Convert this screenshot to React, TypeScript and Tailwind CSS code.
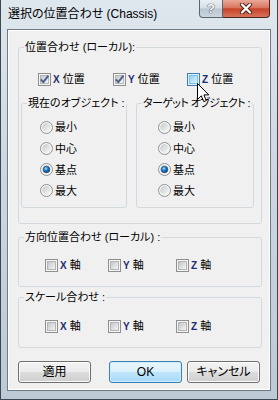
import type { ReactNode } from "react";

function CheckBox({ checked = false, hot = false }: { checked?: boolean; hot?: boolean }) {
  return (
    <svg width="13" height="13" viewBox="0 0 13 13" className="shrink-0">
      <defs>
        <linearGradient id="cbNormal" x1="0" y1="0" x2="1" y2="1">
          <stop offset="0" stopColor="#c2c4c6" />
          <stop offset="1" stopColor="#f7f7f7" />
        </linearGradient>
        <linearGradient id="cbHot" x1="0" y1="0" x2="1" y2="1">
          <stop offset="0" stopColor="#8fcdf5" />
          <stop offset="1" stopColor="#e2f4fe" />
        </linearGradient>
      </defs>
      <rect x="0.5" y="0.5" width="12" height="12" fill={hot ? "#dff2fd" : "#f5f5f5"} stroke={hot ? "#3c7fb1" : "#8e8f8f"} />
      <rect
        x="2.5"
        y="2.5"
        width="8"
        height="8"
        fill={hot ? "url(#cbHot)" : "url(#cbNormal)"}
        stroke={hot ? "#79c0ef" : "#b3b6b9"}
      />
      {checked && (
        <path d="M2.8 6.4 L5.3 9.2 L10.4 2.6" fill="none" stroke="#4b5f8f" strokeWidth="1.9" strokeLinejoin="round" />
      )}
    </svg>
  );
}

function Radio({ on = false }: { on?: boolean }) {
  return (
    <svg width="13" height="13" viewBox="0 0 13 13" className="shrink-0">
      <defs>
        <linearGradient id="rbFill" x1="0" y1="0" x2="1" y2="1">
          <stop offset="0" stopColor="#c6c8ca" />
          <stop offset="1" stopColor="#fafafa" />
        </linearGradient>
        <radialGradient id="rbDot" cx="0.4" cy="0.35" r="0.7">
          <stop offset="0" stopColor="#a4e2ff" />
          <stop offset="0.45" stopColor="#1e7dcc" />
          <stop offset="1" stopColor="#0b3463" />
        </radialGradient>
      </defs>
      <circle cx="6.5" cy="6.5" r="6" fill="#f7f7f7" stroke="#8d8f91" />
      <circle cx="6.5" cy="6.5" r="4.4" fill="url(#rbFill)" />
      {on && <circle cx="6.5" cy="6.5" r="3.3" fill="url(#rbDot)" stroke="#17406b" strokeWidth="0.6" />}
    </svg>
  );
}

function Group({
  label,
  className,
  legendClass = "",
  children,
}: {
  label: string;
  className: string;
  legendClass?: string;
  children: ReactNode;
}) {
  return (
    <fieldset className={`min-w-0 rounded-[3px] border border-[#d3dadf] ${className}`}>
      <legend className={`ml-[5px] px-[1px] text-[11px] leading-[14px] text-black whitespace-nowrap ${legendClass}`}>
        {label}
      </legend>
      {children}
    </fieldset>
  );
}

function Check({
  axis,
  word,
  checked,
  hot,
  className = "",
}: {
  axis: string;
  word: string;
  checked?: boolean;
  hot?: boolean;
  className?: string;
}) {
  return (
    <div className={`flex items-center gap-[2px] h-[14px] ${className}`}>
      <CheckBox checked={checked} hot={hot} />
      <span className="text-[11px] leading-[14px] whitespace-nowrap">
        <span className="font-bold text-[10px] text-[#1d2d72]">{axis}</span> {word}
      </span>
    </div>
  );
}

function RadioRow({ label, on, className }: { label: string; on?: boolean; className: string }) {
  return (
    <div className={`flex items-center gap-[2px] ${className}`}>
      <Radio on={on} />
      <span className="text-[11px] leading-[14px]">{label}</span>
    </div>
  );
}

function RadioList({ className }: { className: string }) {
  return (
    <div className={`mt-[6px] mb-[6px] ${className}`}>
      <RadioRow label="最小" className="h-[22px]" />
      <RadioRow label="中心" className="h-[21px]" />
      <RadioRow label="基点" on className="h-[21px]" />
      <RadioRow label="最大" className="h-[21px]" />
    </div>
  );
}

const plain =
  "h-[22px] w-[73px] rounded-[3px] border border-[#707070] bg-[linear-gradient(#f3f3f3_0%,#ebebeb_50%,#dddddd_50%,#cfcfcf_100%)] shadow-[inset_0_0_0_1px_#fbfbfb] text-[12px] leading-[14px] text-black";
const primary =
  "h-[22px] w-[73px] rounded-[3px] border border-[#3c7fb1] bg-[linear-gradient(#eaf6fd_0%,#d9f0fc_50%,#bee6fd_50%,#a7d9f5_100%)] shadow-[inset_0_0_0_1px_#cdeeff] text-[12px] leading-[14px] text-black";

export default function App() {
  return (
    <div className="relative w-[278px] h-[400px] flex flex-col border-x border-b border-[#3d4854] bg-[linear-gradient(#dfe7ee_0%,#cdd8e2_40%,#bccad6_100%)] font-['Liberation_Sans','Noto_Sans_CJK_JP',sans-serif] [font-feature-settings:'palt'] text-black select-none">
      <div className="h-[29px] flex justify-between items-start">
        <div className="pl-[7px] pt-[7px] text-[12px] leading-[14px] whitespace-nowrap">選択の位置合わせ (Chassis)</div>
        <div className="flex mr-[7px]">
          <div className="w-[24px] h-[18px] rounded-bl-[4px] border border-t-0 border-[#5a6672] bg-[linear-gradient(#e9eef3_0%,#d5dee6_48%,#b9c6d2_52%,#cbd6df_100%)] flex items-center justify-center text-[13px] leading-[14px] font-bold text-white [text-shadow:0_0_1px_#333,0_0_1px_#333]">
            ?
          </div>
          <div className="w-[47px] h-[18px] rounded-br-[4px] border border-l-0 border-t-0 border-[#4a2620] bg-[linear-gradient(#eaa898_0%,#da7660_45%,#c6432a_52%,#d8735a_100%)] flex items-center justify-center">
            <svg width="14" height="11" viewBox="0 0 14 11">
              <path d="M3 1.5 L11 9.5 M11 1.5 L3 9.5" stroke="#4a2018" strokeWidth="4.2" strokeLinecap="round" />
              <path d="M3 1.5 L11 9.5 M11 1.5 L3 9.5" stroke="#ffffff" strokeWidth="2.4" strokeLinecap="round" />
            </svg>
          </div>
        </div>
      </div>

      <div className="mx-[6px] h-[362px] border border-[#6e7a86] bg-[#f0f0f0] shadow-[inset_0_0_0_1px_#ffffff]">
        <Group label="位置合わせ (ローカル):" className="ml-[10px] mt-[10px] w-[244px] pb-[15px]">
          <div className="flex pl-[19px] pt-[18px]">
            <Check axis="X" word="位置" checked className="w-[75px]" />
            <Check axis="Y" word="位置" checked className="w-[74px]" />
            <Check axis="Z" word="位置" hot />
          </div>
          <div className="flex pl-[2px] mt-[10px]">
            <Group label="現在のオブジェクト :" className="w-[106px] shrink-0">
              <RadioList className="pl-[18px]" />
            </Group>
            <Group
              label="ターゲット オブジェクト :"
              legendClass="tracking-[-0.6px]"
              className="ml-[9px] w-[118px] shrink-0"
            >
              <RadioList className="pl-[21px]" />
            </Group>
          </div>
        </Group>

        <Group label="方向位置合わせ (ローカル) :" className="ml-[10px] mt-[6px] w-[244px] pb-[14px]">
          <div className="flex pl-[26px] pt-[14px]">
            <Check axis="X" word="軸" className="w-[63px]" />
            <Check axis="Y" word="軸" className="w-[68px]" />
            <Check axis="Z" word="軸" />
          </div>
        </Group>

        <Group label="スケール合わせ :" className="ml-[10px] mt-[3px] w-[244px] pb-[14px]">
          <div className="flex pl-[26px] pt-[15px]">
            <Check axis="X" word="軸" className="w-[63px]" />
            <Check axis="Y" word="軸" className="w-[68px]" />
            <Check axis="Z" word="軸" />
          </div>
        </Group>

        <div className="flex ml-[10px] mt-[13px]">
          <button className={plain}>適用</button>
          <button className={`ml-[18px] ${primary}`}>OK</button>
          <button className={`ml-[5px] ${plain}`}>キャンセル</button>
        </div>
      </div>

      <svg width="13" height="20" viewBox="0 0 13 20" className="absolute left-[196px] top-[83px] pointer-events-none">
        <path
          d="M0.5 0.5 L0.5 16.5 L4.3 12.8 L6.8 18.6 L9.3 17.6 L6.9 11.9 L11.8 11.9 Z"
          fill="#ffffff"
          stroke="#000000"
          strokeWidth="1"
          strokeLinejoin="round"
        />
      </svg>
    </div>
  );
}
